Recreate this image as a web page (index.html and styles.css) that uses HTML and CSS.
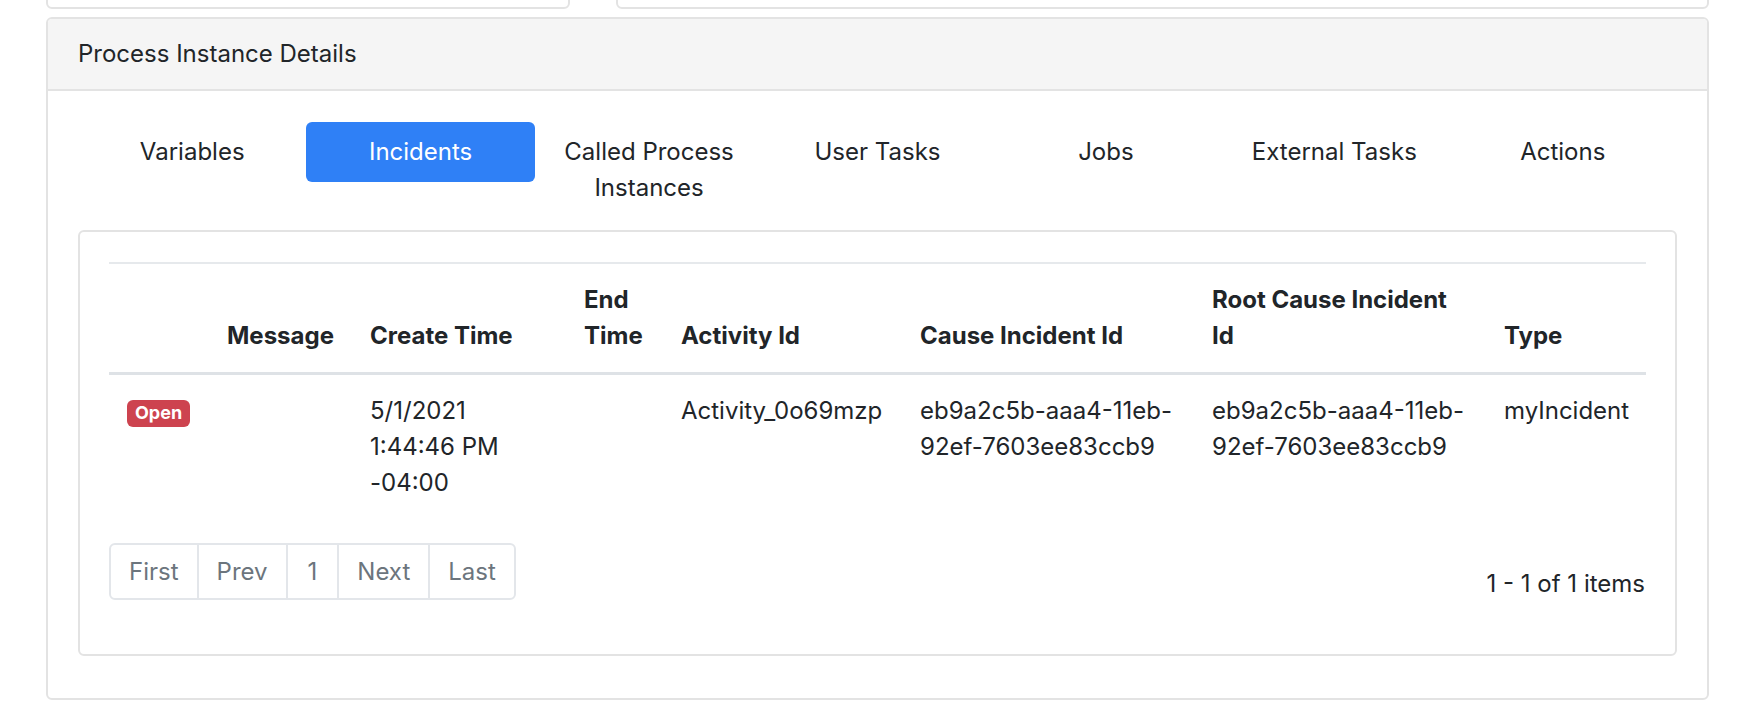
FILE: index.html
```html
<!DOCTYPE html>
<html lang="en">
<head>
<meta charset="utf-8">
<title>Process Instance Details</title>
<link rel="stylesheet" href="styles.css">
</head>
<body>
<div class="page">
  <div class="top-row">
    <div class="card top-card top-left"></div>
    <div class="card top-card top-right"></div>
  </div>

  <div class="card main-card">
    <div class="card-header">Process Instance Details</div>
    <div class="card-body">
      <ul class="nav">
        <li class="nav-item"><a class="nav-link">Variables</a></li>
        <li class="nav-item"><a class="nav-link active">Incidents</a></li>
        <li class="nav-item"><a class="nav-link">Called Process Instances</a></li>
        <li class="nav-item"><a class="nav-link">User Tasks</a></li>
        <li class="nav-item"><a class="nav-link">Jobs</a></li>
        <li class="nav-item"><a class="nav-link">External Tasks</a></li>
        <li class="nav-item"><a class="nav-link">Actions</a></li>
      </ul>

      <div class="tab-content">
        <div class="card inner-card">
          <div class="inner-body">
            <table class="table">
              <colgroup>
                <col class="c-state">
                <col class="c-message">
                <col class="c-create">
                <col class="c-end">
                <col class="c-activity">
                <col class="c-cause">
                <col class="c-root">
                <col class="c-type">
              </colgroup>
              <thead>
                <tr>
                  <th></th>
                  <th>Message</th>
                  <th>Create Time</th>
                  <th>End Time</th>
                  <th>Activity Id</th>
                  <th>Cause Incident Id</th>
                  <th>Root Cause Incident Id</th>
                  <th>Type</th>
                </tr>
              </thead>
              <tbody>
                <tr>
                  <td><span class="badge">Open</span></td>
                  <td></td>
                  <td>5/1/2021 1:44:46 PM -04:00</td>
                  <td></td>
                  <td>Activity_0o69mzp</td>
                  <td>eb9a2c5b-aaa4-11eb-92ef-7603ee83ccb9</td>
                  <td>eb9a2c5b-aaa4-11eb-92ef-7603ee83ccb9</td>
                  <td>myIncident</td>
                </tr>
              </tbody>
            </table>

            <div class="table-footer">
              <ul class="pagination">
                <li class="page-item first"><span class="page-link">First</span></li>
                <li class="page-item"><span class="page-link">Prev</span></li>
                <li class="page-item num"><span class="page-link">1</span></li>
                <li class="page-item"><span class="page-link">Next</span></li>
                <li class="page-item last"><span class="page-link">Last</span></li>
              </ul>
              <div class="count">1 - 1 of 1 items</div>
            </div>
          </div>
        </div>
      </div>
    </div>
  </div>
</div>
</body>
</html>
```

FILE: styles.css
```css
html, body {
  margin: 0;
  padding: 0;
  background: #ffffff;
}

body {
  font-family: Inter, "Noto Sans", "Liberation Sans", sans-serif;
  font-size: 24px;
  line-height: 36px;
  color: #212529;
  overflow: hidden;
}

.page {
  padding: 0 43px 0 46px;
}

.card {
  box-sizing: border-box;
  background: #ffffff;
  border: 2px solid #e3e3e3;
  border-radius: 6px;
}

/* partially scrolled-off cards at the top */
.top-row {
  display: flex;
  gap: 46px;
  margin-top: -51px;
}

.top-card {
  height: 60px;
}

.top-left {
  flex: 0 0 524px;
}

.top-right {
  flex: 1 1 auto;
}

.main-card {
  margin-top: 8px;
}

.card-header {
  background: #f5f5f5;
  border-bottom: 2px solid #e3e3e3;
  border-radius: 4px 4px 0 0;
  padding: 17px 30px;
}

.card-body {
  padding: 31px 30px 30px;
}

/* pills */
.nav {
  display: flex;
  list-style: none;
  margin: 0;
  padding: 0;
}

.nav-item {
  flex: 1 1 0;
  text-align: center;
}

.nav-link {
  display: block;
  padding: 12px 24px;
  border-radius: 6px;
  color: #212529;
}

.nav-link.active {
  background: #2f80f6;
  color: #ffffff;
}

.tab-content {
  margin: 12px 0 12px;
}

.inner-body {
  padding: 30px 29px;
}

/* table */
.table {
  width: 100%;
  table-layout: fixed;
  border-collapse: collapse;
  margin-bottom: 24px;
}

.c-state { width: 100px; }
.c-message { width: 143px; }
.c-create { width: 214px; }
.c-end { width: 97px; }
.c-activity { width: 239px; }
.c-cause { width: 292px; }
.c-root { width: 292px; }
.c-type { width: 160px; }

.table th,
.table td {
  padding: 18px;
  text-align: left;
  vertical-align: top;
  border-top: 2px solid #e6e9ec;
}

.table thead th {
  vertical-align: bottom;
  font-weight: 700;
  border-bottom: 3px solid #dee2e6;
}

.badge {
  display: inline-block;
  font-size: 18px;
  font-weight: 700;
  line-height: 1;
  padding: 4.5px 8px;
  border-radius: 6px;
  background: #cd434f;
  color: #ffffff;
}

/* footer */
.table-footer {
  display: flex;
  justify-content: space-between;
  align-items: center;
}

.pagination {
  display: flex;
  list-style: none;
  margin: 0 0 24px;
  padding: 0;
}

.page-link {
  display: block;
  padding: 12px 18px 11px;
  line-height: 30px;
  color: #6c757d;
  border: 2px solid #e3e6ea;
  margin-left: -2px;
}

.page-item.num .page-link {
  padding-left: 20px;
  padding-right: 20px;
}

.page-item.first .page-link {
  margin-left: 0;
  border-radius: 6px 0 0 6px;
}

.page-item.last .page-link {
  border-radius: 0 6px 6px 0;
}

.count {
  line-height: 36px;
  margin-right: 1px;
}
```
